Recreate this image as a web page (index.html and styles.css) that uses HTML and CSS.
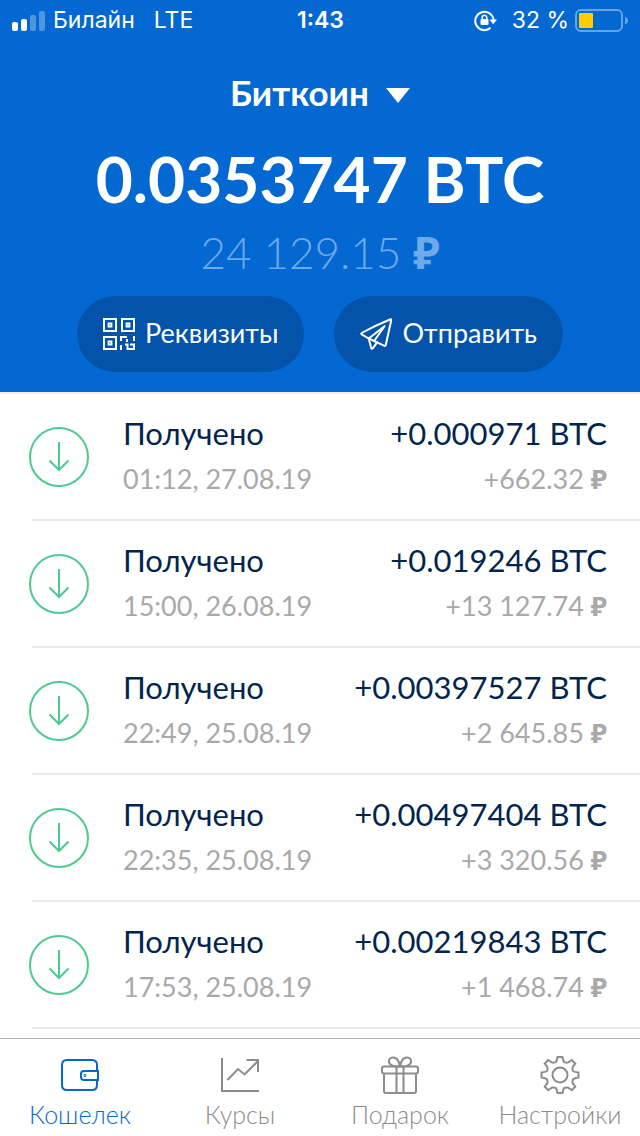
FILE: index.html
```html
<!DOCTYPE html>
<html lang="ru">
<head>
<meta charset="utf-8">
<meta name="viewport" content="width=device-width, initial-scale=1">
<title>Биткоин — Кошелек</title>
<link rel="stylesheet" href="styles.css">
</head>
<body>
<header class="header">
  <div class="status">
    <div class="status-left">
      <svg class="signal" width="34" height="20" viewBox="0 0 34 20" fill="#fff" aria-hidden="true">
        <rect x="0" y="11" width="6" height="9" rx="2"/>
        <rect x="9" y="8" width="6" height="12" rx="2"/>
        <rect x="18" y="4" width="6" height="16" rx="2" opacity=".3"/>
        <rect x="27" y="0" width="6" height="20" rx="2" opacity=".3"/>
      </svg>
      <span class="carrier">Билайн</span>
      <span>LTE</span>
    </div>
    <div class="status-time">1:43</div>
    <div class="status-right">
      <svg width="24" height="22" viewBox="0 0 24 22" fill="none" stroke="#fff" stroke-width="2" aria-hidden="true">
        <path d="M16.6 17.8A9.2 9.2 0 1 1 19.6 10"/>
        <path d="M15.4 9.6h7.6l-3.8 4.6z" fill="#fff" stroke="none"/>
        <rect x="6.500" y="9" width="8" height="6" rx="1" fill="#fff" stroke="none"/>
        <path d="M8.200 9.500V7.600a2.300 2.300 0 0 1 4.600 0v1.900" stroke-width="1.500"/>
      </svg>
      <span class="percent">32 %</span>
      <svg width="54" height="24" viewBox="0 0 54 24" fill="none" aria-hidden="true">
        <rect x="1" y="1" width="46" height="21" rx="5" stroke="#fff" stroke-opacity=".4" stroke-width="2"/>
        <rect x="4" y="4" width="14" height="15" rx="1" fill="#fc0"/>
        <path d="M50 8q3 1 3 3.700t-3 3.700z" fill="#fff" fill-opacity=".4"/>
      </svg>
    </div>
  </div>
  <button class="currency" type="button">Биткоин
    <svg width="24" height="16" viewBox="0 0 24 16" fill="#fff" aria-hidden="true"><path d="M0 0h24L12 15z"/></svg>
  </button>
  <h1 class="balance">0.0353747 BTC</h1>
  <p class="fiat">24 129.15 <b>₽</b></p>
  <div class="actions">
    <button class="action" type="button">
      <svg width="32" height="32" viewBox="0 0 32 32" fill="none" stroke="#fff" stroke-width="2" aria-hidden="true">
        <path d="M1 1h12v12H1zM19 1h12v12H19zM1 19h12v12H1z"/>
        <path d="M5.500 5.500h3v3h-3zM23.500 5.500h3v3h-3zM5.500 23.500h3v3h-3z" stroke-width="1.800"/>
        <path d="M18 23v-4h6M18 27v5M24 21v3M31 18v5M27 26.500h4V31h-6.500v-4.500H22"/>
      </svg>
      Реквизиты
    </button>
    <button class="action" type="button">
      <svg width="32" height="32" viewBox="0 0 32 32" fill="none" stroke="#fff" stroke-width="2" stroke-linejoin="round" stroke-linecap="round" aria-hidden="true">
        <path d="M30.600 1.200Q16 7 1.700 15q-1 .8 0 1.300l7 4.200L24.500 27.800q.9.300 1.200-.6L31.300 2q.1-1-.7-.8z"/>
        <path d="M24.500 8.200L8.700 20.500l2.600 9.700q.6 1.200 1.500.2l4.300-6M24.500 8.200L14.500 22.500"/>
      </svg>
      Отправить
    </button>
  </div>
</header>

<main class="list">
  <article class="row">
    <svg class="received" viewBox="0 0 60 60" aria-hidden="true"><circle cx="30" cy="30" r="29"/><path d="M30 15v28M20.500 33.500L30 43l9.500-9.500"/></svg>
    <div class="info"><h2>Получено</h2><time>01:12, 27.08.19</time></div>
    <div class="sum"><strong>+0.000971 BTC</strong><span>+662.32 <b>₽</b></span></div>
  </article>
  <article class="row">
    <svg class="received" viewBox="0 0 60 60" aria-hidden="true"><circle cx="30" cy="30" r="29"/><path d="M30 15v28M20.500 33.500L30 43l9.500-9.500"/></svg>
    <div class="info"><h2>Получено</h2><time>15:00, 26.08.19</time></div>
    <div class="sum"><strong>+0.019246 BTC</strong><span>+13 127.74 <b>₽</b></span></div>
  </article>
  <article class="row">
    <svg class="received" viewBox="0 0 60 60" aria-hidden="true"><circle cx="30" cy="30" r="29"/><path d="M30 15v28M20.500 33.500L30 43l9.500-9.500"/></svg>
    <div class="info"><h2>Получено</h2><time>22:49, 25.08.19</time></div>
    <div class="sum"><strong>+0.00397527 BTC</strong><span>+2 645.85 <b>₽</b></span></div>
  </article>
  <article class="row">
    <svg class="received" viewBox="0 0 60 60" aria-hidden="true"><circle cx="30" cy="30" r="29"/><path d="M30 15v28M20.500 33.500L30 43l9.500-9.500"/></svg>
    <div class="info"><h2>Получено</h2><time>22:35, 25.08.19</time></div>
    <div class="sum"><strong>+0.00497404 BTC</strong><span>+3 320.56 <b>₽</b></span></div>
  </article>
  <article class="row">
    <svg class="received" viewBox="0 0 60 60" aria-hidden="true"><circle cx="30" cy="30" r="29"/><path d="M30 15v28M20.500 33.500L30 43l9.500-9.500"/></svg>
    <div class="info"><h2>Получено</h2><time>17:53, 25.08.19</time></div>
    <div class="sum"><strong>+0.00219843 BTC</strong><span>+1 468.74 <b>₽</b></span></div>
  </article>
</main>

<nav class="tabs">
  <a class="tab tab-active" href="#wallet">
    <svg viewBox="0 0 40 40" aria-hidden="true"><path d="M37 15V9q0-5-5-5H7Q2 4 2 9v20q0 5 5 5h25q5 0 5-5v-5"/><path d="M24 15h14v9H24q-3 0-3-3v-3q0-3 3-3z"/><circle cx="25" cy="19.500" r=".4"/></svg>
    Кошелек
  </a>
  <a class="tab" href="#rates">
    <svg viewBox="0 0 40 40" aria-hidden="true"><path d="M2 2v33h37M7.500 24L18 13l6.500 5.500L38 5M26.500 4H38v12"/></svg>
    Курсы
  </a>
  <a class="tab" href="#gift">
    <svg viewBox="0 0 40 40" aria-hidden="true"><path d="M4 10.500h32q2 0 2 2v3q0 2-2 2H4q-2 0-2-2v-3q0-2 2-2zM4 17.500V35q0 2 2 2h28q2 0 2-2V17.500M16.500 10.500V37M23.500 10.500V37"/><path d="M19.500 10.500C10 10.500 8.500 7 9 4.500c1-5 10.500-4.500 10.500 6zM20.500 10.500C30 10.500 31.500 7 31 4.500c-1-5-10.500-4.500-10.500 6z"/></svg>
    Подарок
  </a>
  <a class="tab" href="#settings">
    <svg viewBox="0 0 40 40" aria-hidden="true"><circle cx="20" cy="19" r="7.500"/><path d="M17.500 1h5q.7 4.500 2 5.200 2 .9 3.700.2L31.800 4l3.500 3.500-2.600 3.500q-.7 1.800.2 3.800.8 1.200 5.600 1.700v5q-4.800.8-5.600 2-.9 2-.2 3.700l2.600 3.500-3.500 3.500-3.600-2.500q-1.700-.7-3.700.2-1.300.8-2 5.100h-5q-.7-4.300-2-5.100-2-.9-3.700-.2l-3.600 2.500-3.500-3.500 2.600-3.500q.7-1.700-.2-3.700-.8-1.200-5.600-2v-5q4.800-.5 5.600-1.700.9-2 .2-3.800L4.700 7.500 8.200 4l3.600 2.400q1.700.7 3.700-.2 1.300-.7 2-5.200z"/></svg>
    Настройки
  </a>
</nav>
</body>
</html>
```
FILE: styles.css
```css
* {
  box-sizing: border-box;
}

body {
  margin: 0;
  min-height: 100vh;
  display: flex;
  flex-direction: column;
  background: #fff;
  color: #01254f;
  font-family: Lato, "Noto Sans", sans-serif;
}

h1, h2, p {
  margin: 0;
  font-weight: 400;
}

b {
  font-weight: 700;
}

svg {
  display: block;
  flex: none;
}

button {
  border: 0;
  background: none;
  color: inherit;
  font-family: inherit;
  cursor: pointer;
}

.header {
  display: flex;
  flex-direction: column;
  align-items: center;
  padding-bottom: 20px;
  background: #0368d1;
  color: #fff;
}

.status {
  display: grid;
  grid-template-columns: 1fr auto 1fr;
  align-items: center;
  width: 100%;
  height: 41px;
  padding: 0 11px 0 12px;
  font-family: Inter, "Noto Sans", sans-serif;
  font-size: 23px;
  line-height: 41px;
}

.status-left,
.status-right {
  display: flex;
  align-items: center;
}

.carrier {
  margin: 0 19px 0 7px;
}

.status-time {
  font-weight: 600;
}

.status-right {
  justify-content: flex-end;
}

.percent {
  margin: 0 6px 0 14px;
}

.currency {
  display: flex;
  align-items: center;
  gap: 17px;
  margin-top: 30px;
  padding: 0;
  font-size: 35px;
  font-weight: 700;
  line-height: 42px;
}

.currency svg {
  margin-top: 7px;
}

.balance {
  margin-top: 26px;
  font-size: 64px;
  font-weight: 700;
  line-height: 80px;
}

.fiat {
  margin-top: 7px;
  color: #6ea9e8;
  font-size: 44px;
  font-weight: 300;
  line-height: 52px;
}

.actions {
  display: flex;
  gap: 30px;
  margin-top: 18px;
}

.action {
  display: flex;
  align-items: center;
  gap: 10px;
  height: 76px;
  padding: 0 26px 4px;
  border-radius: 38px;
  background: #0353ab;
  font-size: 27px;
}

.action svg {
  margin-top: 4px;
}

.list {
  flex: 1;
  border-top: 2px solid #ebeff2;
  padding-bottom: 9px;
}

.row {
  display: flex;
  align-items: center;
  height: 127px;
  margin-left: 32px;
  padding-right: 33px;
  border-bottom: 2px solid #e9e9e9;
}

.received {
  width: 60px;
  height: 60px;
  margin: 0 34px 0 -3px;
  fill: none;
  stroke: #4dca91;
  stroke-width: 2;
}

.info,
.sum {
  display: flex;
  flex-direction: column;
  gap: 6px;
  padding-bottom: 2px;
}

.info {
  flex: 1;
}

.sum {
  align-items: flex-end;
}

.row h2,
.row strong {
  font-size: 31px;
  font-weight: 400;
  line-height: 40px;
}

.row time,
.sum span {
  color: #a9a9a9;
  font-size: 27px;
  line-height: 40px;
}

.tabs {
  display: grid;
  grid-template-columns: repeat(4, 1fr);
  height: 98px;
  border-top: 1px solid #b2b2b2;
}

.tab {
  display: flex;
  flex-direction: column;
  align-items: center;
  gap: 4px;
  padding-top: 17px;
  color: #8c8c8c;
  font-size: 25px;
  font-weight: 300;
  line-height: 28px;
  text-decoration: none;
}

.tab svg {
  width: 40px;
  height: 40px;
  fill: none;
  stroke: currentColor;
  stroke-width: 2;
}

.tab-active {
  color: #0368d1;
}
```
